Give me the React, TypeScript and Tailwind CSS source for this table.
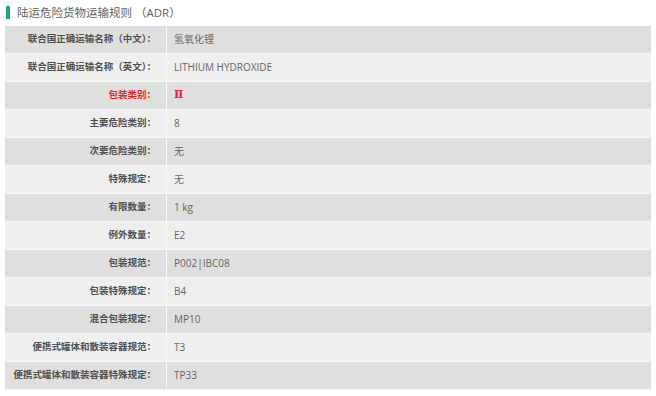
import React from "react";

const rows: { label: string; value: string; red?: boolean }[] = [
  { label: "联合国正确运输名称（中文）：", value: "氢氧化锂" },
  { label: "联合国正确运输名称（英文）：", value: "LITHIUM HYDROXIDE" },
  { label: "包装类别：", value: "Ⅱ", red: true },
  { label: "主要危险类别：", value: "8" },
  { label: "次要危险类别：", value: "无" },
  { label: "特殊规定：", value: "无" },
  { label: "有限数量：", value: "1 kg" },
  { label: "例外数量：", value: "E2" },
  { label: "包装规范：", value: "P002|IBC08" },
  { label: "包装特殊规定：", value: "B4" },
  { label: "混合包装规定：", value: "MP10" },
  { label: "便携式罐体和散装容器规范：", value: "T3" },
  { label: "便携式罐体和散装容器特殊规定：", value: "TP33" },
];

export default function App() {
  return (
    <div
      className="w-[656px] h-[396px] bg-white overflow-hidden"
      style={{ fontFamily: '"Open Sans", "Noto Sans CJK SC", sans-serif' }}
    >
      <div className="flex items-center h-[26px] pl-[6px] pb-[1px]">
        <div className="w-[4px] h-[13px] bg-[#1fa67a]" />
        <div className="ml-[7px] text-[11.5px] text-[#5f5f5f] leading-none">
          陆运危险货物运输规则 （ADR）
        </div>
      </div>
      <div className="ml-[5px] w-[646px] flex flex-col">
        {rows.map((r, i) => (
          <div
            key={i}
            className={`flex h-[28px] border-b border-[#f7f7f7] ${
              i % 2 === 0 ? "bg-[#dfdfdf]" : "bg-[#efefef]"
            }`}
          >
            <div
              className={`w-[162px] shrink-0 border-r border-[#f7f7f7] flex items-center justify-end pr-[10px] text-[9.5px] font-bold ${
                r.red ? "text-[#e3262b]" : "text-[#505050]"
              }`}
            >
              {r.label}
            </div>
            <div
              className={`flex items-center pl-[7px] ${
                r.red ? "text-[#e3262b] font-bold text-[11px]" : "text-[#666] text-[10px]"
              }`}
              style={
                r.red
                  ? { fontFamily: '"DejaVu Serif", "Liberation Serif", serif' }
                  : undefined
              }
            >
              {r.value}
            </div>
          </div>
        ))}
      </div>
    </div>
  );
}
